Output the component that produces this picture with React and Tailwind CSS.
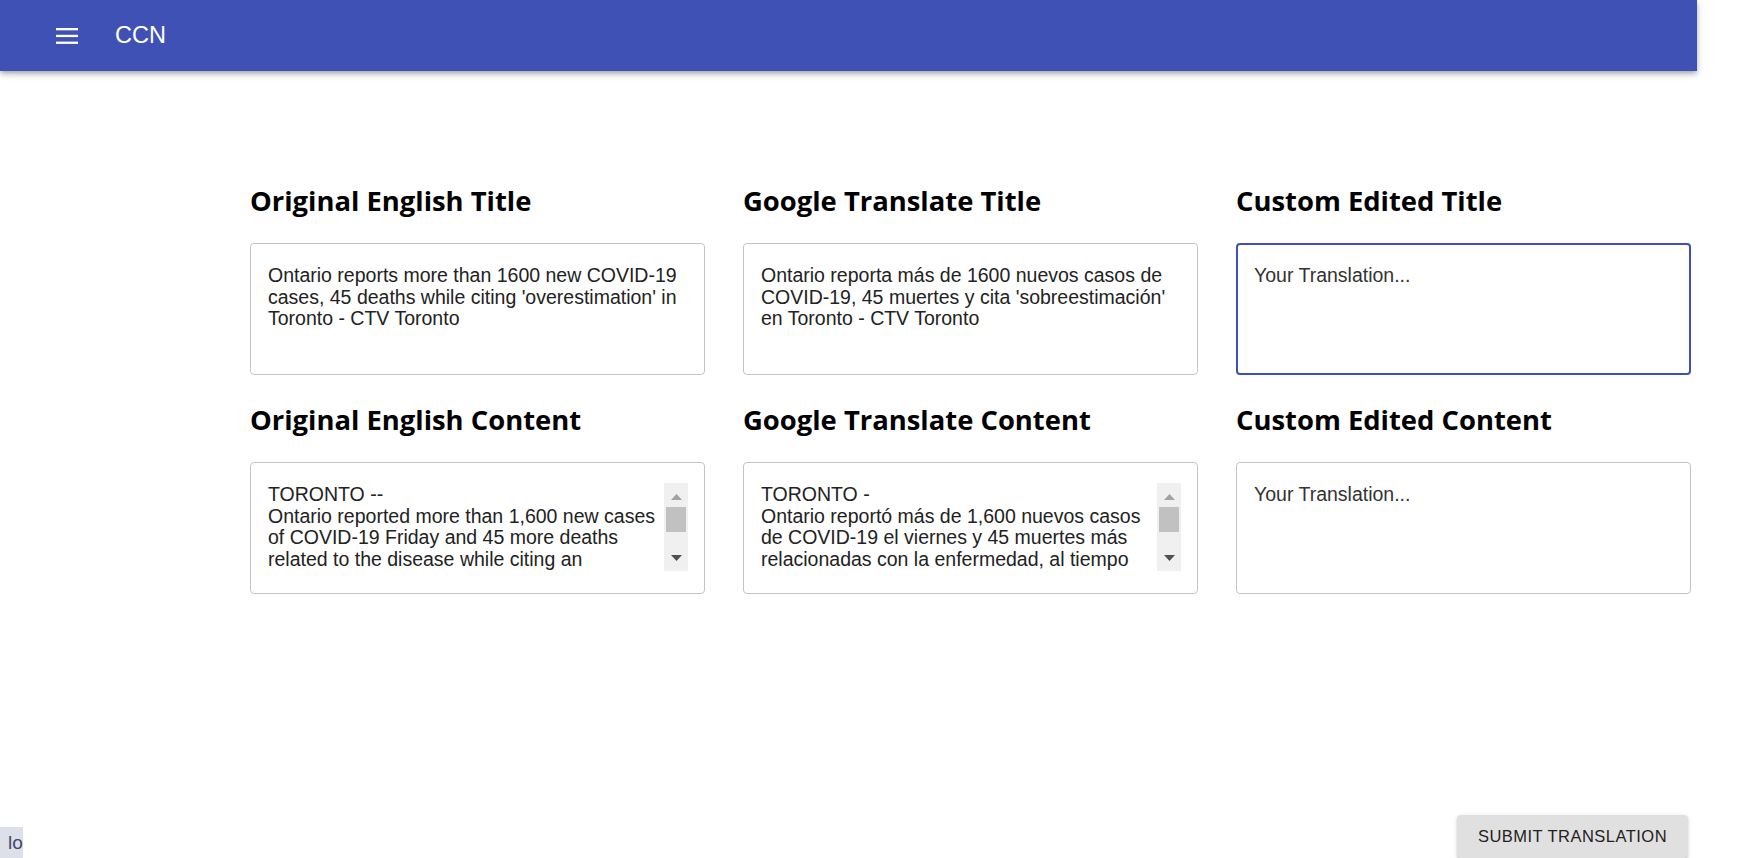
import React from 'react';

const HEAD = "font-['Open_Sans',sans-serif] font-bold text-[27.4px] leading-[34px] text-black";
const BODY = "text-[19.5px] leading-[21.7px] text-[#222222]";

function MenuIcon() {
  return (
    <svg width="22" height="16" viewBox="0 0 22 16" aria-hidden>
      <rect x="0" y="0" width="22" height="2.3" fill="#fff" />
      <rect x="0" y="6.8" width="22" height="2.3" fill="#fff" />
      <rect x="0" y="13.6" width="22" height="2.3" fill="#fff" />
    </svg>
  );
}

function FakeScrollbar() {
  return (
    <div className="w-[24px] h-[88px] bg-[#f0f0f0] flex flex-col shrink-0">
      <div className="h-[24px] flex items-center justify-center pt-[3px]">
        <svg width="11" height="6" viewBox="0 0 11 6" aria-hidden>
          <path d="M0 6L5.5 0L11 6Z" fill="#a3a3a3" />
        </svg>
      </div>
      <div className="mx-[2px] h-[25px] bg-[#c1c1c1]" />
      <div className="flex-1" />
      <div className="h-[24px] flex items-center justify-center pb-[3px]">
        <svg width="11" height="6" viewBox="0 0 11 6" aria-hidden>
          <path d="M0 0L11 0L5.5 6Z" fill="#505050" />
        </svg>
      </div>
    </div>
  );
}

function Field({ label, text, scroll, placeholder, focused }) {
  const box = focused
    ? 'border-2 border-[#3f51b5] pl-[16px] pr-[15px] pt-[20px]'
    : 'border border-[#c4c4c4] pl-[17px] pr-[16px] pt-[21px]';
  return (
    <div>
      <h2 className={HEAD}>{label}</h2>
      <div className={`mt-[25px] h-[132px] rounded-[4px] ${box}`}>
        {placeholder ? (
          <div className={`${BODY} text-[#333333]`}>{placeholder}</div>
        ) : scroll ? (
          <div className="flex -mt-px">
            <div className={`flex-1 pt-px whitespace-pre-line ${BODY}`}>{text}</div>
            <FakeScrollbar />
          </div>
        ) : (
          <div className={BODY}>{text}</div>
        )}
      </div>
    </div>
  );
}

const ORIG_CONTENT =
  "TORONTO --\nOntario reported more than 1,600 new cases of COVID-19 Friday and 45 more deaths related to the disease while citing an";
const GOOGLE_CONTENT =
  "TORONTO -\nOntario reportó más de 1,600 nuevos casos de COVID-19 el viernes y 45 muertes más relacionadas con la enfermedad, al tiempo";

export default function App() {
  return (
    <div className="h-[858px] overflow-hidden bg-white flex flex-col font-['Liberation_Sans',Arial,sans-serif]">
      <header className="relative z-10 h-[71px] w-[1697px] shrink-0 bg-[#3f51b5] flex items-center shadow-[0_2px_4px_-1px_rgba(0,0,0,0.2),0_4px_5px_0_rgba(0,0,0,0.14),0_1px_10px_0_rgba(0,0,0,0.12)]">
        <button className="ml-[56px] flex items-center" aria-label="menu">
          <MenuIcon />
        </button>
        <span className="ml-[37px] text-[23.5px] leading-none text-white">CCN</span>
      </header>

      <main className="pl-[250px] pt-[113px] grid grid-cols-[455px_455px_455px] gap-x-[38px] gap-y-[28px]">
        <Field
          label="Original English Title"
          text="Ontario reports more than 1600 new COVID-19 cases, 45 deaths while citing 'overestimation' in Toronto - CTV Toronto"
        />
        <Field
          label="Google Translate Title"
          text="Ontario reporta más de 1600 nuevos casos de COVID-19, 45 muertes y cita 'sobreestimación' en Toronto - CTV Toronto"
        />
        <Field label="Custom Edited Title" placeholder="Your Translation..." focused />
        <Field label="Original English Content" text={ORIG_CONTENT} scroll />
        <Field label="Google Translate Content" text={GOOGLE_CONTENT} scroll />
        <Field label="Custom Edited Content" placeholder="Your Translation..." />
      </main>

      <div className="mt-auto flex items-end justify-between pr-[62px]">
        <div className="w-[23px] h-[31px] overflow-hidden bg-[#dde0e8] pl-[8px] pt-[5px] text-[19px] leading-[22px] text-[#3d4770] whitespace-nowrap">
          lo
        </div>
        <button className="h-[43px] w-[231px] rounded-[4px] bg-[#e0e0e0] text-[16.5px] uppercase tracking-[0.02857em] text-[#222222] shadow-[0_3px_1px_-2px_rgba(0,0,0,0.2),0_2px_2px_0_rgba(0,0,0,0.14),0_1px_5px_0_rgba(0,0,0,0.12)]">
          Submit Translation
        </button>
      </div>
    </div>
  );
}
